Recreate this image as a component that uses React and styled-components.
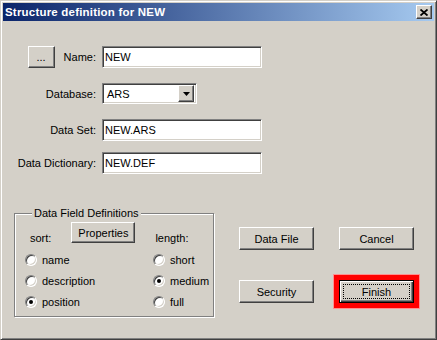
import styled, { createGlobalStyle } from 'styled-components'

const Global = createGlobalStyle`
  body { margin: 0; background: #d4d0c8; }
  * { box-sizing: border-box; }
`

const Window = styled.div`
  width: 437px;
  height: 340px;
  background: #d4d0c8;
  border: 1px solid;
  border-color: #d4d0c8 #404040 #404040 #d4d0c8;
  box-shadow: inset 1px 1px #fff, inset -1px -1px #808080;
  padding: 2px;
  display: flex;
  flex-direction: column;
  font-family: "Liberation Sans", Arial, sans-serif;
  font-size: 11px;
  color: #000;
`

const TitleBar = styled.div`
  height: 18px;
  flex: none;
  display: flex;
  align-items: center;
  justify-content: space-between;
  padding: 0 2px;
  background: linear-gradient(to right, #0a246a, #a6caf0);
`

const Title = styled.span`
  color: #fff;
  font-weight: bold;
  font-size: 11.5px;
  letter-spacing: 0.2px;
`

const raised = `
  background: #d4d0c8;
  border: 1px solid;
  border-color: #fff #404040 #404040 #fff;
  box-shadow: inset -1px -1px #808080;
`

const sunken = `
  background: #fff;
  border: 1px solid;
  border-color: #808080 #fff #fff #808080;
  box-shadow: inset 1px 1px #404040, inset -1px -1px #d4d0c8;
`

const CloseBox = styled.div`
  ${raised}
  width: 16px;
  height: 14px;
  display: flex;
  align-items: center;
  justify-content: center;
`

const Client = styled.div`
  flex: 1;
  padding: 25px 0 0 11px;
  display: flex;
  flex-direction: column;
`

const Form = styled.div`
  display: grid;
  grid-template-columns: 82px 160px;
  column-gap: 6px;
  align-items: center;
`

const LabelCell = styled.div`
  display: flex;
  align-items: center;
  justify-content: flex-end;
  gap: 9px;
  margin-top: ${p => p.$top || 0}px;
`

const FieldCell = styled.div`
  margin-top: ${p => p.$top || 0}px;
`

const Field = styled.input`
  ${sunken}
  width: 160px;
  height: 22px;
  font: inherit;
  color: #000;
  padding: 0 2px;
  outline: none;
  display: block;
`

const Combo = styled.div`
  ${sunken}
  width: 95px;
  height: 21px;
  display: flex;
  align-items: center;
  padding: 2px 2px 2px 4px;
`

const DropButton = styled.div`
  ${raised}
  margin-left: auto;
  width: 16px;
  height: 17px;
  display: flex;
  align-items: center;
  justify-content: center;
`

const Button = styled.button`
  ${raised}
  width: ${p => p.$w}px;
  height: ${p => p.$h}px;
  font: inherit;
  color: #000;
  padding: 0;
  cursor: default;
`

const DefaultButton = styled.button`
  width: 75px;
  height: 23px;
  font: inherit;
  color: #000;
  background: #d4d0c8;
  border: 1px solid #000;
  padding: 3px;
  box-shadow: inset 1px 1px #fff, inset -1px -1px #404040, inset -2px -2px #808080,
    0 0 0 5px #f00, 0 0 0 6px #ff9090;
`

const FocusRect = styled.span`
  display: flex;
  align-items: center;
  justify-content: center;
  height: 100%;
  border: 1px dotted #000;
`

const Bottom = styled.div`
  display: flex;
  align-items: flex-start;
  gap: 25px;
  margin-top: 33px;
`

const Group = styled.fieldset`
  width: 200px;
  height: 110px;
  margin: 0;
  padding: 2px 0 0 10px;
  border: 1px solid #808080;
  box-shadow: inset 1px 1px #fff, 1px 1px #fff;
`

const Legend = styled.legend`
  margin-left: 7px;
  padding: 0 2px;
  line-height: 13px;
  background: #d4d0c8;
`

const GroupHead = styled.div`
  display: flex;
  align-items: flex-end;
  gap: 20px;
  padding-left: 5px;
`

const HeadLabel = styled.span`
  line-height: 13px;
  margin-bottom: -2px;
`

const Radios = styled.div`
  display: grid;
  grid-template-columns: 128px auto;
  row-gap: 8px;
  margin-top: 10px;
`

const RadioRow = styled.label`
  display: flex;
  align-items: center;
  gap: 5px;
  height: 13px;
`

const RadioMark = styled.span`
  width: 12px;
  height: 12px;
  border-radius: 50%;
  background: #fff;
  border: 1px solid;
  border-color: #808080 #fff #fff #808080;
  box-shadow: inset 1px 1px #404040, inset -1px -1px #d4d0c8;
  display: flex;
  align-items: center;
  justify-content: center;
  &::after {
    content: "";
    width: 4px;
    height: 4px;
    border-radius: 50%;
    background: ${p => (p.$checked ? '#000' : 'transparent')};
  }
`

const ButtonGrid = styled.div`
  display: grid;
  grid-template-columns: 75px 75px;
  column-gap: 25px;
  row-gap: 30px;
  margin-top: 20px;
`

const Radio = ({ label, checked }) => (
  <RadioRow>
    <RadioMark $checked={checked} />
    {label}
  </RadioRow>
)

const rows = [
  { label: 'Name:', value: 'NEW', top: 0, browse: true },
  { label: 'Database:', combo: 'ARS', top: 15 },
  { label: 'Data Set:', value: 'NEW.ARS', top: 15 },
  { label: 'Data Dictionary:', value: 'NEW.DEF', top: 11 },
]

const sortOpts = [
  ['name', false],
  ['description', false],
  ['position', true],
]
const lengthOpts = [
  ['short', false],
  ['medium', true],
  ['full', false],
]

export default function App() {
  return (
    <>
      <Global />
      <Window>
        <TitleBar>
          <Title>Structure definition for NEW</Title>
          <CloseBox>
            <svg width="8" height="7" viewBox="0 0 8 7">
              <path d="M0.5 0.5 L7.5 6.5 M7.5 0.5 L0.5 6.5" stroke="#000" strokeWidth="1.8" />
            </svg>
          </CloseBox>
        </TitleBar>
        <Client>
          <Form>
            {rows.map(r => (
              <>
                <LabelCell key={r.label} $top={r.top}>
                  {r.browse && <Button $w={27} $h={22}>...</Button>}
                  <span>{r.label}</span>
                </LabelCell>
                <FieldCell key={r.label + 'f'} $top={r.top}>
                  {r.combo ? (
                    <Combo>
                      {r.combo}
                      <DropButton>
                        <svg width="7" height="4" viewBox="0 0 7 4">
                          <path d="M0 0 H7 L3.5 4 Z" fill="#000" />
                        </svg>
                      </DropButton>
                    </Combo>
                  ) : (
                    <Field readOnly value={r.value} />
                  )}
                </FieldCell>
              </>
            ))}
          </Form>
          <Bottom>
            <Group>
              <Legend>Data Field Definitions</Legend>
              <GroupHead>
                <HeadLabel>sort:</HeadLabel>
                <Button $w={64} $h={21}>Properties</Button>
                <HeadLabel>length:</HeadLabel>
              </GroupHead>
              <Radios>
                {sortOpts.map((s, i) => (
                  <>
                    <Radio key={s[0]} label={s[0]} checked={s[1]} />
                    <Radio key={lengthOpts[i][0]} label={lengthOpts[i][0]} checked={lengthOpts[i][1]} />
                  </>
                ))}
              </Radios>
            </Group>
            <ButtonGrid>
              <Button $w={75} $h={23}>Data File</Button>
              <Button $w={75} $h={23}>Cancel</Button>
              <Button $w={75} $h={23}>Security</Button>
              <DefaultButton>
                <FocusRect>Finish</FocusRect>
              </DefaultButton>
            </ButtonGrid>
          </Bottom>
        </Client>
      </Window>
    </>
  )
}
